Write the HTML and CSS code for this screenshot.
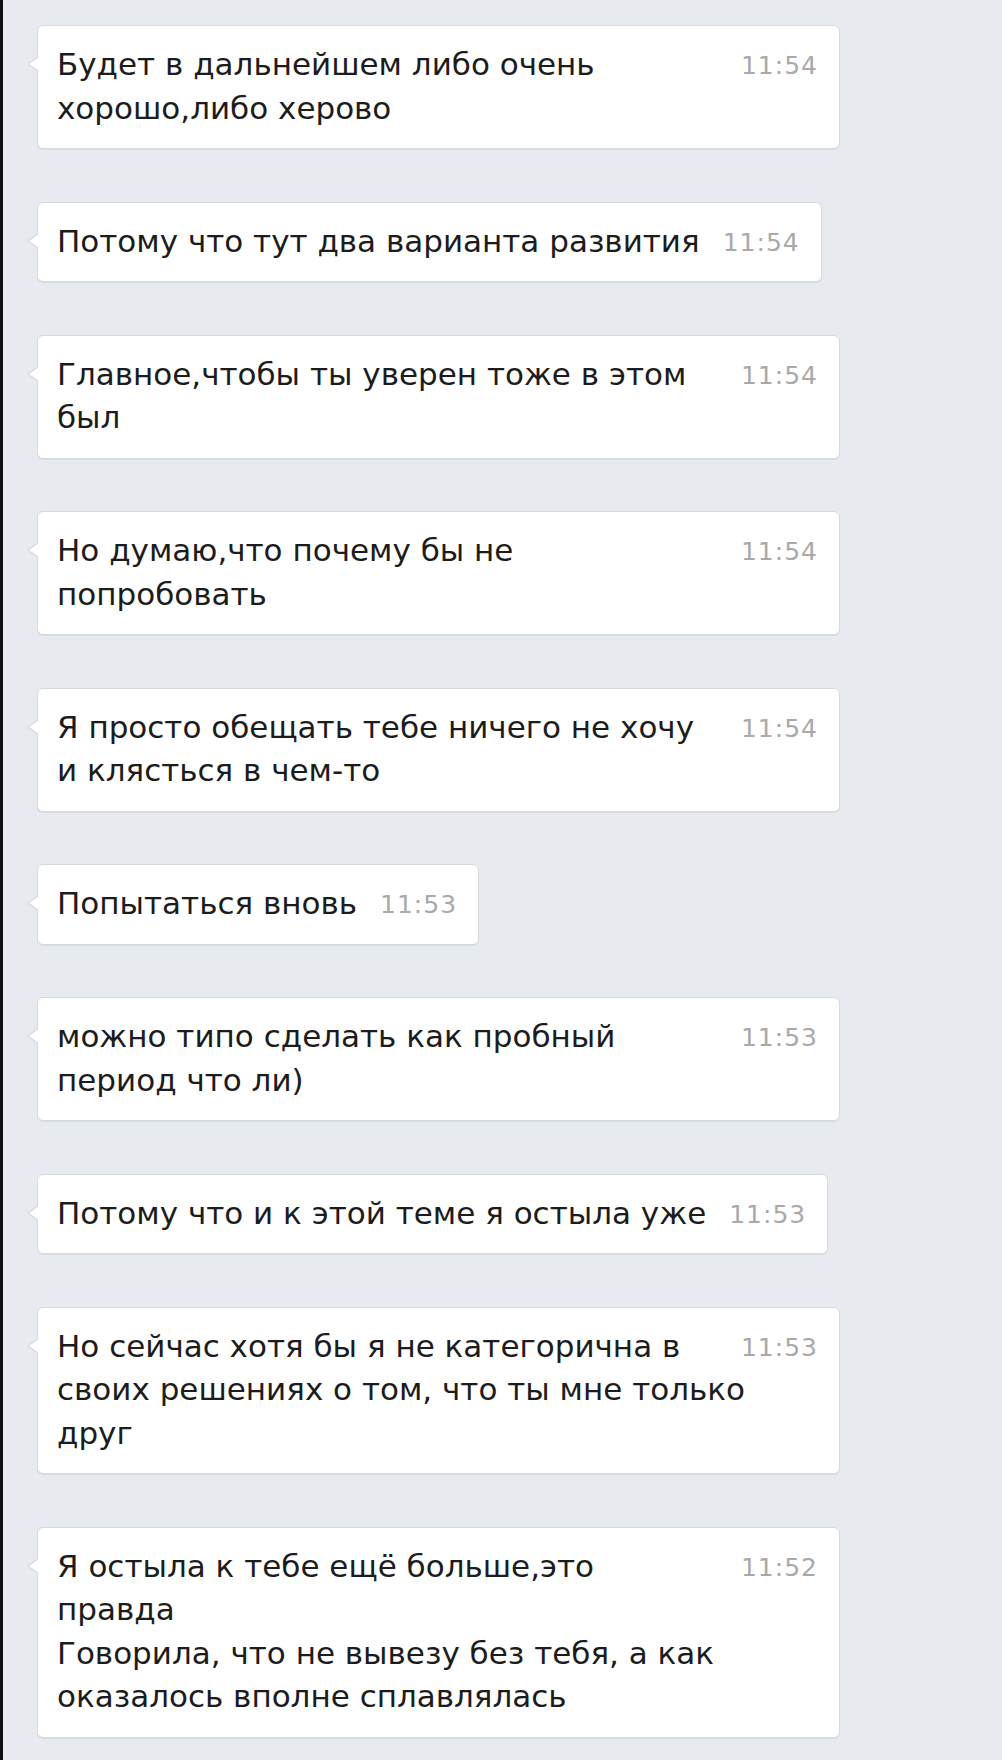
FILE: index.html
```html
<!DOCTYPE html>
<html lang="ru">
<head>
<meta charset="utf-8">
<title>Сообщения</title>
<link rel="stylesheet" href="styles.css">
</head>
<body>
<div class="screen">
  <div class="msg"><span class="time">11:54</span><span class="text">Будет в дальнейшем либо очень хорошо,либо херово</span></div>
  <div class="msg"><span class="time">11:54</span><span class="text">Потому что тут два варианта развития</span></div>
  <div class="msg"><span class="time">11:54</span><span class="text">Главное,чтобы ты уверен тоже в этом был</span></div>
  <div class="msg"><span class="time">11:54</span><span class="text">Но думаю,что почему бы не попробовать</span></div>
  <div class="msg"><span class="time">11:54</span><span class="text">Я просто обещать тебе ничего не хочу и клясться в чем-то</span></div>
  <div class="msg"><span class="time">11:53</span><span class="text">Попытаться вновь</span></div>
  <div class="msg"><span class="time">11:53</span><span class="text">можно типо сделать как пробный период что ли)</span></div>
  <div class="msg"><span class="time">11:53</span><span class="text">Потому что и к этой теме я остыла уже</span></div>
  <div class="msg"><span class="time">11:53</span><span class="text">Но сейчас хотя бы я не категорична в своих решениях о том, что ты мне только друг</span></div>
  <div class="msg"><span class="time">11:52</span><span class="text">Я остыла к тебе ещё больше,это правда<br>Говорила, что не вывезу без тебя, а как оказалось вполне сплавлялась</span></div>
</div>
</body>
</html>
```

FILE: styles.css
```css
html, body {
  margin: 0;
  padding: 0;
  background: #e7eaee;
}

.screen {
  min-height: 1760px;
  box-sizing: border-box;
  border-left: 3px solid #101010;
  padding: 25px 0 20px 34px;
  display: flex;
  flex-direction: column;
  align-items: flex-start;
  gap: 52.5px;
  font-family: "DejaVu Sans", Verdana, sans-serif;
}

.msg {
  position: relative;
  box-sizing: border-box;
  max-width: 803px;
  background: #ffffff;
  border: 1px solid #d5dae0;
  border-radius: 6px;
  box-shadow: 0 1px 0 #d9dde3;
  padding: 17px 21px 18px 19px;
  font-size: 31px;
  line-height: 43.5px;
  color: #1c1c1c;
}

.msg::before,
.msg::after {
  content: "";
  position: absolute;
  top: 30px;
  width: 0;
  height: 0;
  border-style: solid;
}

.msg::before {
  left: -11px;
  border-width: 8px 11px 8px 0;
  border-color: transparent #d5dae0 transparent transparent;
}

.msg::after {
  left: -9px;
  top: 31px;
  border-width: 7px 10px 7px 0;
  border-color: transparent #ffffff transparent transparent;
}

.time {
  float: right;
  margin-left: 23px;
  margin-top: 3px;
  font-size: 25px;
  line-height: 40.5px;
  letter-spacing: 1px;
  color: #a9a9a9;
}
```
